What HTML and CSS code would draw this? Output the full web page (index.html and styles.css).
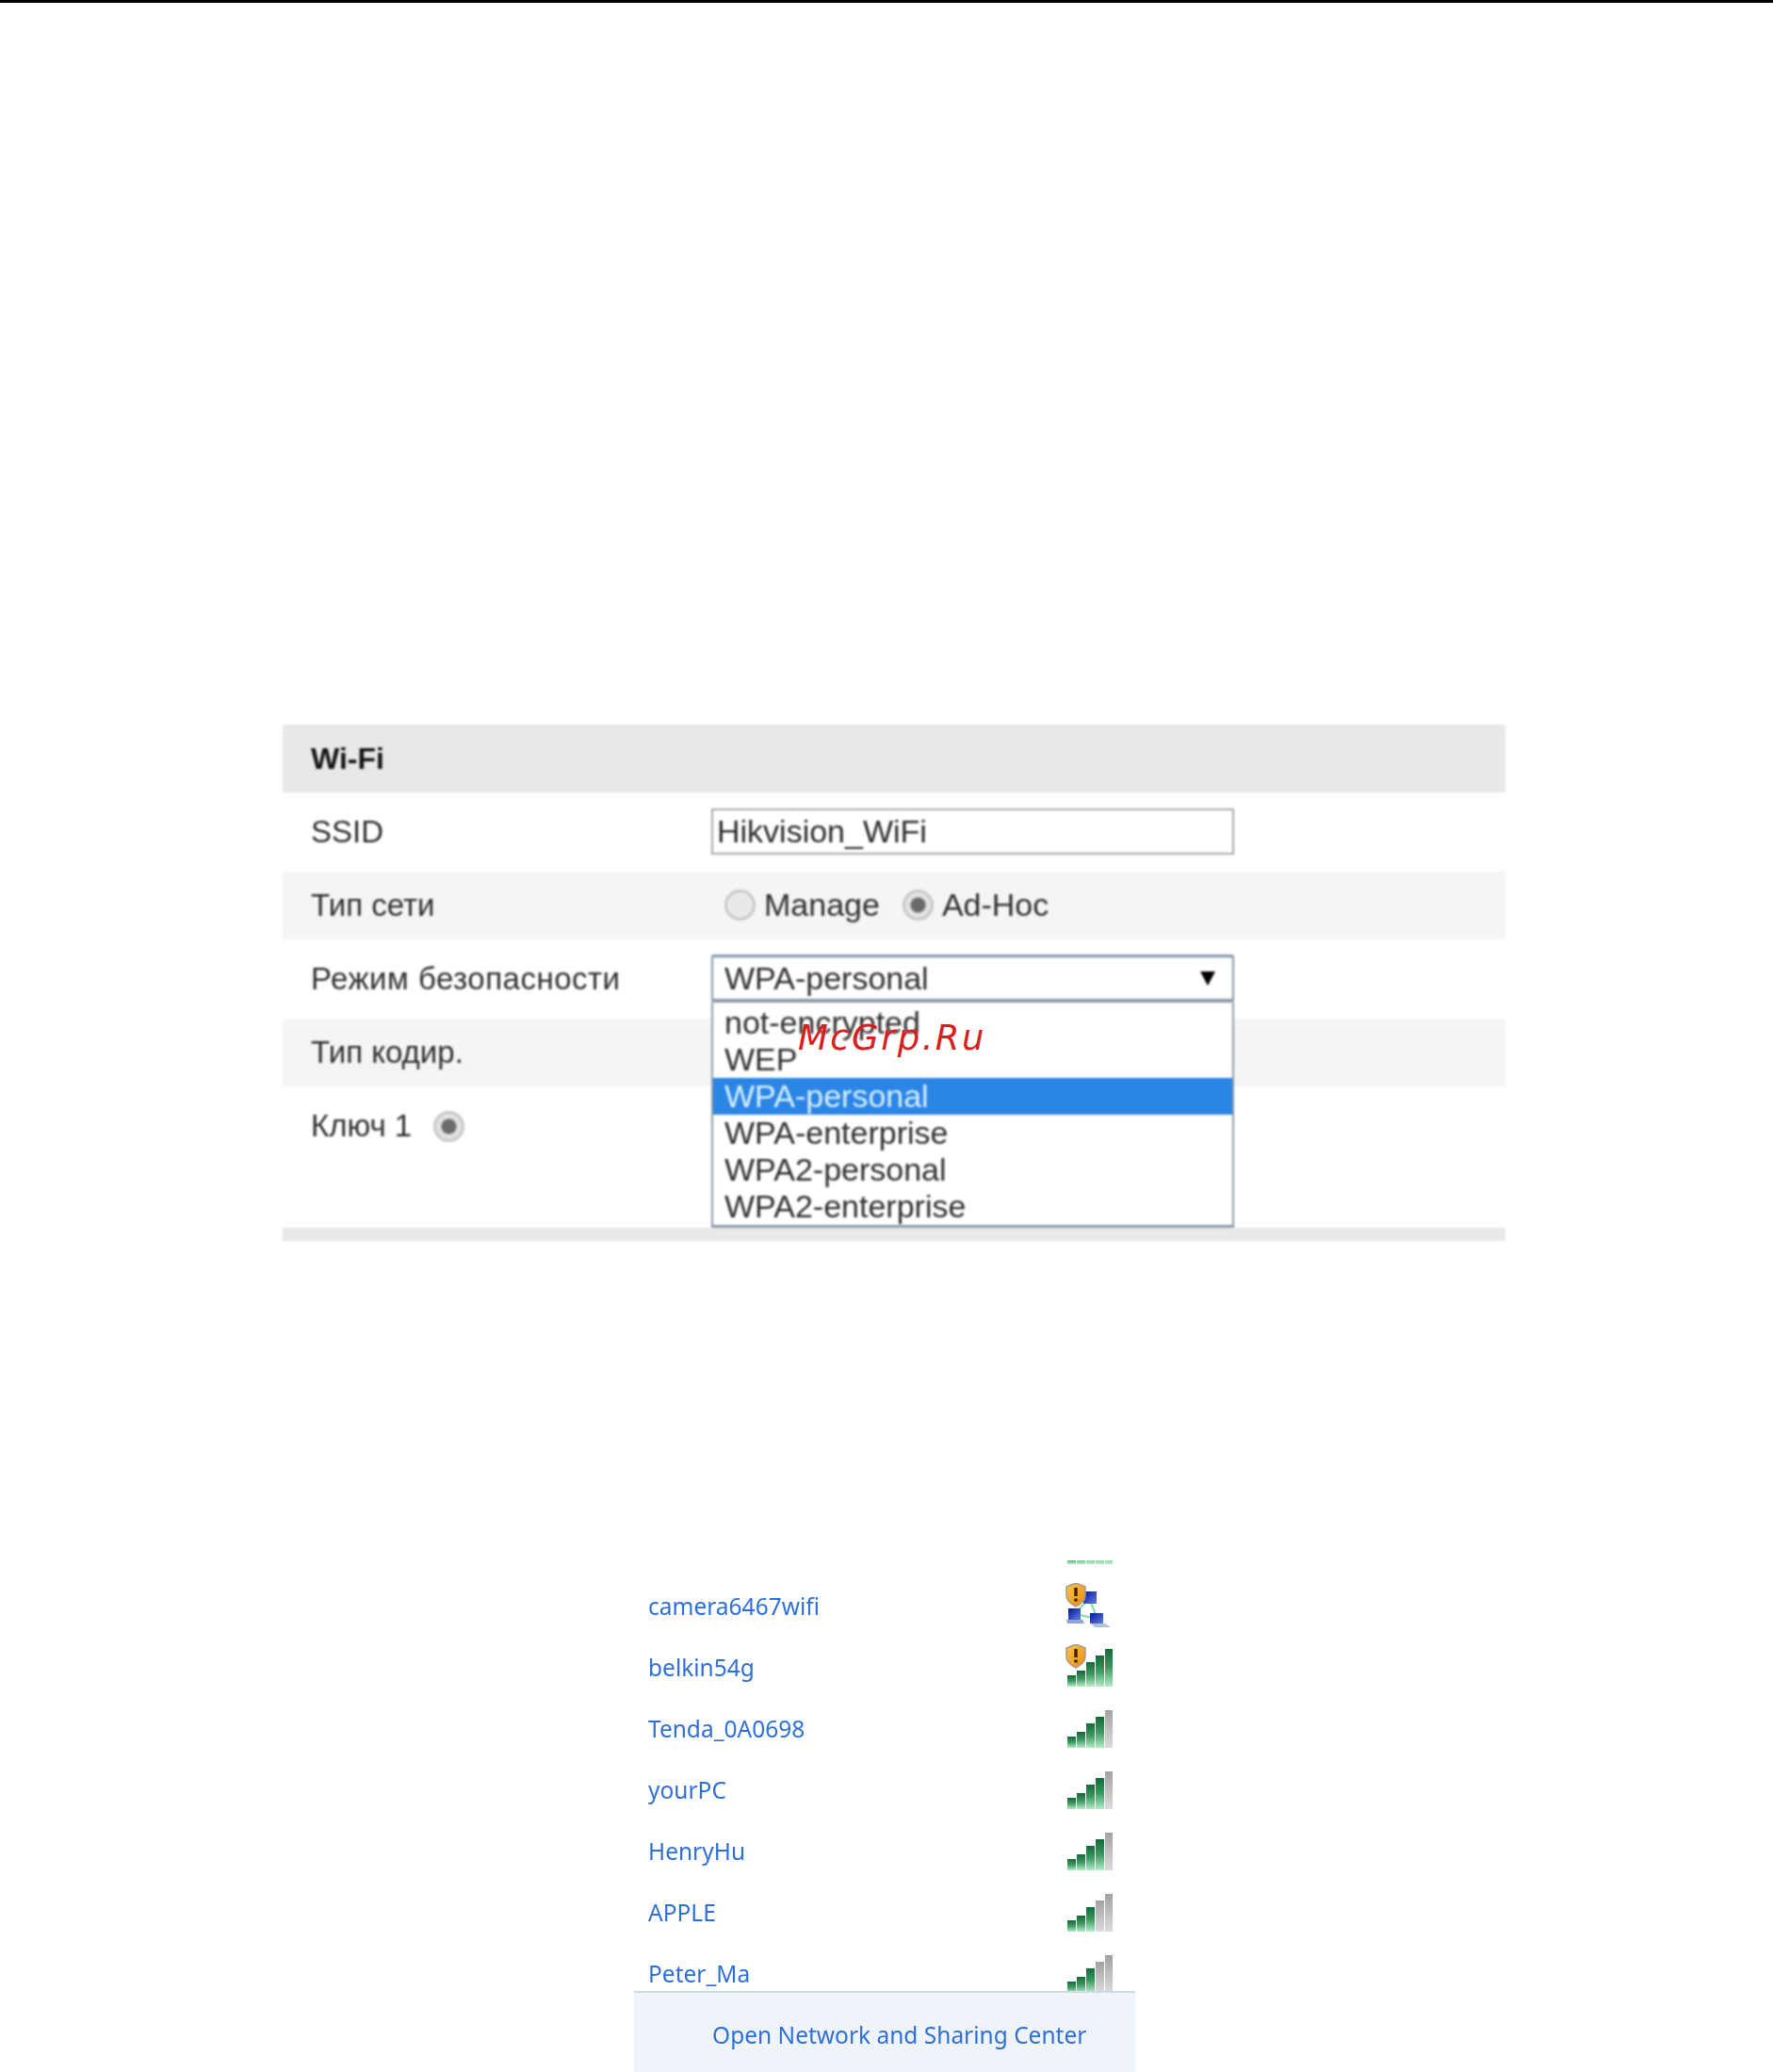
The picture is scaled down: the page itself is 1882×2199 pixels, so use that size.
FILE: index.html
```html
<!DOCTYPE html>
<html lang="ru">
<head>
<meta charset="utf-8">
<title>Wi-Fi</title>
<link rel="stylesheet" href="styles.css">
</head>
<body>
<svg class="defs" width="0" height="0" aria-hidden="true">
  <defs>
    <linearGradient id="on" x1="0" y1="0" x2="0" y2="1"><stop offset="0" stop-color="#126a38"/><stop offset="0.5" stop-color="#3c9a60"/><stop offset="1" stop-color="#b4ecc6"/></linearGradient>
    <linearGradient id="off" x1="0" y1="0" x2="0" y2="1"><stop offset="0" stop-color="#a2a2a2"/><stop offset="1" stop-color="#dcdcdc"/></linearGradient>
    <linearGradient id="shieldfill" x1="0" y1="0" x2="1" y2="1"><stop offset="0" stop-color="#fbc64c"/><stop offset="1" stop-color="#e98a12"/></linearGradient>
    <linearGradient id="pc" x1="0" y1="0" x2="1" y2="1"><stop offset="0" stop-color="#06149c"/><stop offset="1" stop-color="#5f80dc"/></linearGradient>
    <g id="bars-3">
      <rect x="2" y="33" width="9" height="12" fill="url(#on)"/><rect x="12" y="28" width="9" height="17" fill="url(#on)"/><rect x="22" y="19" width="9" height="26" fill="url(#on)"/><rect x="32" y="12" width="9" height="33" fill="url(#off)"/><rect x="42" y="5" width="8" height="40" fill="url(#off)"/>
    </g>
    <g id="bars-4">
      <rect x="2" y="33" width="9" height="12" fill="url(#on)"/><rect x="12" y="28" width="9" height="17" fill="url(#on)"/><rect x="22" y="19" width="9" height="26" fill="url(#on)"/><rect x="32" y="12" width="9" height="33" fill="url(#on)"/><rect x="42" y="5" width="8" height="40" fill="url(#off)"/>
    </g>
    <g id="bars-5">
      <rect x="2" y="33" width="9" height="12" fill="url(#on)"/><rect x="12" y="28" width="9" height="17" fill="url(#on)"/><rect x="22" y="19" width="9" height="26" fill="url(#on)"/><rect x="32" y="12" width="9" height="33" fill="url(#on)"/><rect x="42" y="5" width="8" height="40" fill="url(#on)"/>
    </g>
    <g id="shield">
      <path d="M11 0 L21 4 V13 C21 19 15 23 11 25 C7 23 1 19 1 13 V4 Z" fill="url(#shieldfill)" stroke="#a89c86" stroke-width="1.5"/>
      <path d="M11 5 V14 M11 16.5 V19.5" stroke="#3c2306" stroke-width="3.4" fill="none"/>
    </g>
  </defs>
</svg>
<div class="rule"></div>

<main class="sheet">
  <section class="panel-wrap">
    <div class="panel">
      <div class="row head"><span class="label strong">Wi-Fi</span></div>
      <div class="row tall">
        <span class="label">SSID</span>
        <div class="input">Hikvision_WiFi</div>
      </div>
      <div class="row shade">
        <span class="label">Тип сети</span>
        <div class="radios">
          <span class="radio"></span><span class="radio-text">Manage</span>
          <span class="radio checked second"></span><span class="radio-text">Ad-Hoc</span>
        </div>
      </div>
      <div class="row tall">
        <span class="label spaced">Режим безопасности</span>
        <div class="select">
          <span>WPA-personal</span>
          <span class="arrow"></span>
          <ul class="menu">
            <li>not-encrypted</li>
            <li>WEP</li>
            <li class="active">WPA-personal</li>
            <li>WPA-enterprise</li>
            <li>WPA2-personal</li>
            <li>WPA2-enterprise</li>
          </ul>
        </div>
      </div>
      <div class="row shade"><span class="label">Тип кодир.</span></div>
      <div class="row key">
        <span class="label">Ключ 1</span>
        <span class="radio checked"></span>
      </div>
      <div class="row foot"></div>
    </div>
    <div class="watermark">McGrp.Ru</div>
  </section>

  <section class="networks">
    <div class="list">
      <div class="peek"><svg class="sig" viewBox="0 0 52 50"><use href="#bars-5"/></svg></div>
      <div class="net"><a>camera6467wifi</a>
        <svg class="sig" viewBox="0 0 52 50">
          <path d="M25 16 L10 33 L34 38 Z" fill="none" stroke="#7fe09a" stroke-width="2"/>
          <path d="M19 9 H33 V22 H19 Z" fill="url(#pc)"/>
          <path d="M3 27 H16 V39 H3 Z" fill="url(#pc)"/><path d="M1 39 H18 L20 43 H2 Z" fill="#8fa3d6"/>
          <path d="M26 32 H40 V43 H26 Z" fill="url(#pc)"/><path d="M27 43 H42 L48 47 H31 Z" fill="#b4c0da"/>
          <use href="#shield"/>
        </svg>
      </div>
      <div class="net"><a>belkin54g</a><svg class="sig" viewBox="0 0 52 50"><use href="#bars-5"/><use href="#shield"/></svg></div>
      <div class="net"><a>Tenda_0A0698</a><svg class="sig" viewBox="0 0 52 50"><use href="#bars-4"/></svg></div>
      <div class="net"><a>yourPC</a><svg class="sig" viewBox="0 0 52 50"><use href="#bars-4"/></svg></div>
      <div class="net"><a>HenryHu</a><svg class="sig" viewBox="0 0 52 50"><use href="#bars-4"/></svg></div>
      <div class="net"><a>APPLE</a><svg class="sig" viewBox="0 0 52 50"><use href="#bars-3"/></svg></div>
      <div class="net"><a>Peter_Ma</a><svg class="sig" viewBox="0 0 52 50"><use href="#bars-3"/></svg></div>
    </div>
    <div class="footer"><a>Open Network and Sharing Center</a></div>
  </section>
</main>
</body>
</html>
```
FILE: styles.css
```css
* { box-sizing: border-box; }
html, body { margin: 0; padding: 0; background: #fff; }
body { height: 2199px; overflow: hidden; }
.defs { position: absolute; }
.rule { height: 3px; background: #000; }

.panel-wrap { position: relative; margin: 766px 0 0 300px; width: 1298px; }
.panel { font-family: "Liberation Sans", Arial, sans-serif; font-size: 33px; color: #2e2e2e; filter: blur(0.8px); }

.row { display: flex; align-items: center; padding-left: 30px; }
.label { display: block; width: 425px; flex: none; }
.spaced { letter-spacing: 0.5px; }
.strong { font-weight: 700; color: #141414; font-size: 32px; }
.head { height: 72px; background: #e8e8e8; }
.tall { height: 83.5px; }
.shade { height: 72.5px; background: #f5f5f5; }
.key { height: 150px; align-items: flex-start; line-height: 84px; }
.key .label { width: auto; }
.foot { height: 14px; background: #e8e8e8; }

.input {
  width: 555px; height: 49px; padding-left: 4px; line-height: 45px;
  border: 2px solid #a9a9a9; background: #fff; color: #2a2a2a; font-size: 34px;
}

.radios { display: flex; align-items: center; padding-left: 14px; font-size: 34px; }
.radio {
  display: block; flex: none; width: 33px; height: 33px; border-radius: 50%;
  background: #e9e9e9; border: 3px solid #c9c9c9;
}
.radio.checked { background: radial-gradient(circle, #6b6b6b 0 7px, #e2e2e2 9px); }
.radio-text { margin-left: 9px; }
.radio.second { margin-left: 24px; }
.key .radio { margin: 26px 0 0 23px; }

.select {
  position: relative; display: flex; align-items: center; justify-content: space-between;
  width: 555px; height: 51px; padding: 0 18px 0 12px; font-size: 34px;
  border: 2px solid #8899a8; border-top-width: 3px; border-bottom-width: 4px; border-radius: 3px;
  background: #fff; box-shadow: inset 0 2px 2px #e8f5fc;
}
.arrow { width: 0; height: 0; border-style: solid; border-width: 15px 8px 0; border-color: #000 transparent transparent; }
.menu {
  position: absolute; left: -2px; top: calc(100% + 4px); width: 555px; height: 239px;
  margin: 0; padding: 2px 0 0; list-style: none; background: #fff;
  border: 2px solid #8b9ba9; border-top: 0; border-bottom-width: 3px;
}
.menu li { height: 39px; line-height: 39px; padding-left: 12px; }
.menu .active { background: #2b85e4; color: #d8f0ff; }

.watermark {
  position: absolute; left: 547px; top: 308px;
  font-family: "DejaVu Sans", sans-serif; font-style: italic; font-size: 37px;
  letter-spacing: 2.4px; color: #d81e1e; line-height: 50px;
}

.networks { margin: 339px 0 0 673px; width: 532px; font-family: "Noto Sans", "Open Sans", sans-serif; font-size: 24.5px; filter: blur(0.7px); }
.networks a { color: #2f6fd8; }
.net a { margin-bottom: 3px; }
.list { height: 457px; overflow: hidden; }
.peek { height: 17px; overflow: hidden; display: flex; align-items: flex-end; justify-content: flex-end; padding-right: 23px; padding-bottom: 13px; }
.peek .sig { flex: none; margin: 0 -1px -5px 0; }
.net { height: 65px; display: flex; align-items: center; justify-content: space-between; padding: 0 23px 0 15px; }
.sig { display: block; width: 52px; height: 50px; flex: none; margin: -2px -1px 0 0; }
.footer { height: 86px; padding: 28px 0 0 83px; background: #eff3fa; border-top: 2px solid #ccd8ec; }
```
